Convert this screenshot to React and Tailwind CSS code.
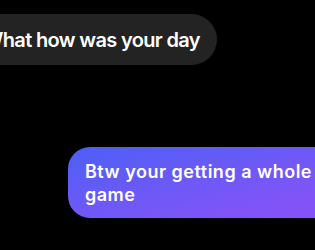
export default function App() {
  return (
    <div className="w-[315px] h-[250px] bg-black overflow-hidden font-['Inter',sans-serif] text-white">
      {/* incoming message */}
      <div className="flex pt-[14px]">
        <div className="-ml-[38px] h-[51px] pl-[21px] pr-[17px] rounded-r-full bg-[#232323] flex items-center text-[20px] tracking-[-0.65px] font-semibold whitespace-nowrap">
          What how was your day
        </div>
      </div>

      {/* outgoing message */}
      <div className="mt-[82px] flex">
        <div className="ml-[68px] w-[280px] shrink-0 rounded-l-[22px] bg-linear-to-br from-[#4a5ff6] to-[#8d4ff8] pl-[17px] pr-[14px] pt-[13px] pb-[12px] text-[18px] tracking-[0.5px] leading-[23px] font-semibold">
          Btw your getting a whole game
        </div>
      </div>
    </div>
  );
}
